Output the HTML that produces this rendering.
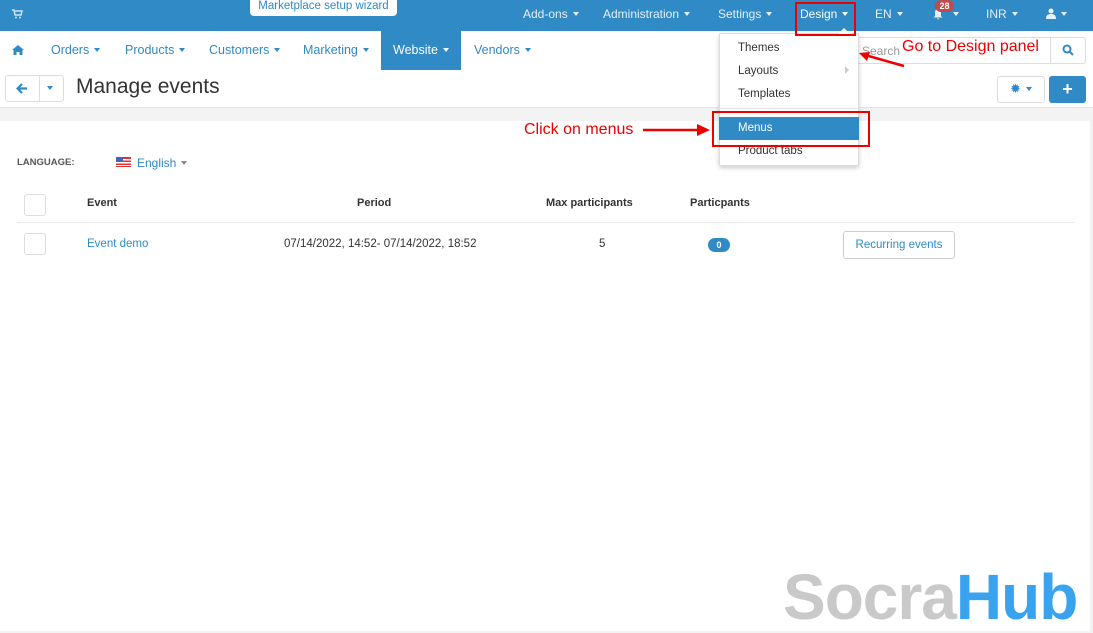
<!DOCTYPE html>
<html><head><meta charset="utf-8"><style>
*{box-sizing:border-box;margin:0;padding:0}
body{width:1093px;height:631px;overflow:hidden;background:#f3f3f3;font-family:"Liberation Sans","DejaVu Sans",sans-serif;font-size:12px;color:#333;position:relative}
.a{position:absolute}
.top{left:0;top:0;width:1093px;height:31px;background:#2f8ac6}
.tw{color:#e6f0f8;font-size:12px;top:7px}
.car{display:inline-block;border-left:3.5px solid transparent;border-right:3.5px solid transparent;border-top:4px solid currentColor;vertical-align:middle;margin-left:5px;margin-top:-2px}
.nav{left:0;top:31px;width:1093px;height:39px;background:#fff}
.nl{color:#2f8ac6;top:43px;font-size:12.5px}
.hdr{left:0;top:70px;width:1093px;height:38px;background:#fff;border-bottom:1px solid #e4e4e4}
.panel{left:0;top:121px;width:1090px;height:510px;background:#fff}
.th{font-weight:bold;font-size:11px;top:197px;color:#333}
.cb{width:22px;height:22px;border:1px solid #ddd;border-radius:3px;background:#fff}
.dd{left:719px;top:33px;width:140px;height:133px;background:#fff;border:1px solid #ddd;box-shadow:0 2px 5px rgba(0,0,0,.2);border-radius:2px}
.di{left:738px;font-size:11.5px;color:#333}
.red{color:#e00;font-size:16px}
</style></head><body>
<div class="a top"></div>
<svg class="a" style="left:12px;top:9px" width="11" height="10" viewBox="0 0 11 10"><path d="M0 1h2l1 5h6l1-4H3" fill="none" stroke="#cfe3f2" stroke-width="1.5"/><circle cx="4" cy="8.5" r="1" fill="#cfe3f2"/><circle cx="8" cy="8.5" r="1" fill="#cfe3f2"/></svg>
<div class="a" style="left:250px;top:-4px;width:147px;height:20px;background:#fff;border-radius:4px;color:#2f8ac6;font-size:11.5px;text-align:center;padding-top:4px">Marketplace setup wizard</div>
<div class="a tw" style="left:523px">Add-ons<span class="car"></span></div>
<div class="a tw" style="left:603px">Administration<span class="car"></span></div>
<div class="a tw" style="left:718px">Settings<span class="car"></span></div>
<div class="a tw" style="left:800px;color:#fff">Design<span class="car"></span></div>
<div class="a tw" style="left:875px">EN<span class="car"></span></div>
<svg class="a" style="left:932px;top:8px" width="12" height="12" viewBox="0 0 12 12"><path d="M6 1C3.5 1 3 3 3 5v3L1.5 9.5h9L9 8V5c0-2-.5-4-3-4zM5 10.5h2a1 1 0 0 1-2 0z" fill="#e6f0f8"/></svg>
<div class="a" style="left:935px;top:0;width:19px;height:12px;background:#c14a4a;border-radius:6px;color:#fff;font-size:9px;font-weight:bold;text-align:center;line-height:12px">28</div>
<div class="a tw" style="left:948px"><span class="car"></span></div>
<div class="a tw" style="left:986px">INR<span class="car"></span></div>
<svg class="a" style="left:1046px;top:8px" width="10" height="11" viewBox="0 0 10 11"><circle cx="5" cy="3" r="2.5" fill="#e6f0f8"/><path d="M0 11c0-4 2-5 5-5s5 1 5 5z" fill="#e6f0f8"/></svg>
<div class="a tw" style="left:1056px"><span class="car"></span></div>

<div class="a nav"></div>
<svg class="a" style="left:12px;top:45px" width="12" height="10" viewBox="0 0 12 10"><path d="M6 0L0 5h1.5v5h3V7h3v3h3V5H12z" fill="#2f8ac6"/></svg>
<div class="a nl" style="left:51px">Orders<span class="car"></span></div>
<div class="a nl" style="left:125px">Products<span class="car"></span></div>
<div class="a nl" style="left:209px">Customers<span class="car"></span></div>
<div class="a nl" style="left:303px">Marketing<span class="car"></span></div>
<div class="a" style="left:381px;top:31px;width:80px;height:39px;background:#2f8ac6"></div>
<div class="a nl" style="left:393px;color:#fff">Website<span class="car"></span></div>
<div class="a nl" style="left:474px">Vendors<span class="car"></span></div>
<div class="a" style="left:855px;top:37px;width:196px;height:27px;border:1px solid #ddd;border-radius:3px 0 0 3px;background:#fff"></div>
<div class="a" style="left:862px;top:44px;color:#999;font-size:12px">Search</div>
<div class="a" style="left:1050px;top:37px;width:36px;height:27px;border:1px solid #ddd;border-radius:0 3px 3px 0;background:#fff"></div>
<svg class="a" style="left:1062px;top:44px" width="12" height="12" viewBox="0 0 12 12"><circle cx="5" cy="5" r="3.5" fill="none" stroke="#2f8ac6" stroke-width="2"/><path d="M7.5 7.5L11 11" stroke="#2f8ac6" stroke-width="2"/></svg>

<div class="a hdr"></div>
<div class="a" style="left:5px;top:75px;width:59px;height:27px;border:1px solid #ddd;border-radius:3px;background:#fff"></div>
<div class="a" style="left:39px;top:75px;width:1px;height:27px;background:#ddd"></div>
<svg class="a" style="left:16px;top:83px" width="12" height="11" viewBox="0 0 12 11"><path d="M6 1L1.5 5.5 6 10M2 5.5h9" fill="none" stroke="#2f8ac6" stroke-width="2.2"/></svg>
<div class="a" style="left:47px;top:80px;color:#2f8ac6"><span class="car" style="margin:0"></span></div>
<div class="a" style="left:76px;top:75px;font-size:21px;color:#333">Manage events</div>
<div class="a" style="left:997px;top:76px;width:48px;height:27px;border:1px solid #ddd;border-radius:3px;background:#fff"></div>
<div class="a" style="left:1010px;top:81px;color:#2f8ac6;font-size:13px">✹<span class="car"></span></div>
<div class="a" style="left:1049px;top:76px;width:37px;height:27px;background:#2f8ac6;border-radius:3px;color:#fff;font-size:18px;font-weight:bold;text-align:center;line-height:26px">+</div>

<div class="a panel"></div>
<div class="a" style="left:17px;top:157px;font-size:9.5px;font-weight:bold;color:#555">LANGUAGE:</div>
<svg class="a" style="left:116px;top:157px" width="15" height="10" viewBox="0 0 15 10"><rect width="15" height="10" fill="#d33"/><rect y="2" width="15" height="1.5" fill="#fff"/><rect y="5" width="15" height="1.5" fill="#fff"/><rect y="8" width="15" height="1" fill="#fff"/><rect width="7" height="5" fill="#4a63b5"/></svg>
<div class="a" style="left:137px;top:156px;color:#2f8ac6;font-size:12px">English<span class="car" style="color:#888"></span></div>
<div class="a cb" style="left:24px;top:194px"></div>
<div class="a th" style="left:87px">Event</div>
<div class="a th" style="left:357px">Period</div>
<div class="a th" style="left:546px">Max participants</div>
<div class="a th" style="left:690px">Particpants</div>
<div class="a" style="left:17px;top:222px;width:1057px;height:1px;background:#e8e8e8"></div>
<div class="a cb" style="left:24px;top:233px"></div>
<div class="a" style="left:87px;top:238px;color:#2f8ac6;font-size:11.5px">Event demo</div>
<div class="a" style="left:284px;top:238px;font-size:11.5px">07/14/2022, 14:52- 07/14/2022, 18:52</div>
<div class="a" style="left:599px;top:238px;font-size:11.5px">5</div>
<div class="a" style="left:708px;top:238px;width:22px;height:14px;background:#2f8ac6;border-radius:7px;color:#fff;font-size:9px;font-weight:bold;text-align:center;line-height:14px">0</div>
<div class="a" style="left:843px;top:231px;width:112px;height:28px;border:1px solid #ccc;border-radius:3px;background:#fff;color:#2f8ac6;font-size:11.5px;text-align:center;line-height:26px">Recurring events</div>

<div class="a dd"></div>
<div class="a" style="left:838px;top:28px;border-left:6px solid transparent;border-right:6px solid transparent;border-bottom:6px solid #fff"></div>
<div class="a di" style="top:42px">Themes</div>
<div class="a di" style="top:65px">Layouts</div>
<div class="a" style="left:845px;top:66px;border-top:4px solid transparent;border-bottom:4px solid transparent;border-left:4px solid #ccc"></div>
<div class="a di" style="top:88px">Templates</div>
<div class="a" style="left:719px;top:108px;width:140px;height:1px;background:#e5e5e5"></div>
<div class="a" style="left:719px;top:117px;width:140px;height:23px;background:#2f8ac6"></div>
<div class="a di" style="top:122px;color:#fff">Menus</div>
<div class="a di" style="top:145px">Product tabs</div>

<div class="a" style="left:795px;top:2px;width:61px;height:34px;border:2.5px solid #e00"></div>
<div class="a" style="left:712px;top:111px;width:158px;height:36px;border:2.5px solid #e00"></div>
<svg class="a" style="left:640px;top:30px" width="270" height="110"><path d="M264 36L225 25" stroke="#e00" stroke-width="2.5"/><path d="M219 23l11-1-3 9z" fill="#e00"/><path d="M3 100H58" stroke="#e00" stroke-width="2.5"/><path d="M70 100l-13-6v12z" fill="#e00"/></svg>
<div class="a red" style="left:902px;top:38px">Go to Design panel</div>
<div class="a red" style="left:524px;top:121px">Click on menus</div>

<div class="a" style="left:783px;top:565px;font-size:64px;font-weight:bold;font-family:'Liberation Sans',sans-serif;letter-spacing:-1px;line-height:1"><span style="color:#c9c9c9">Socra</span><span style="color:#3aa3ef">Hub</span></div>
</body></html>
